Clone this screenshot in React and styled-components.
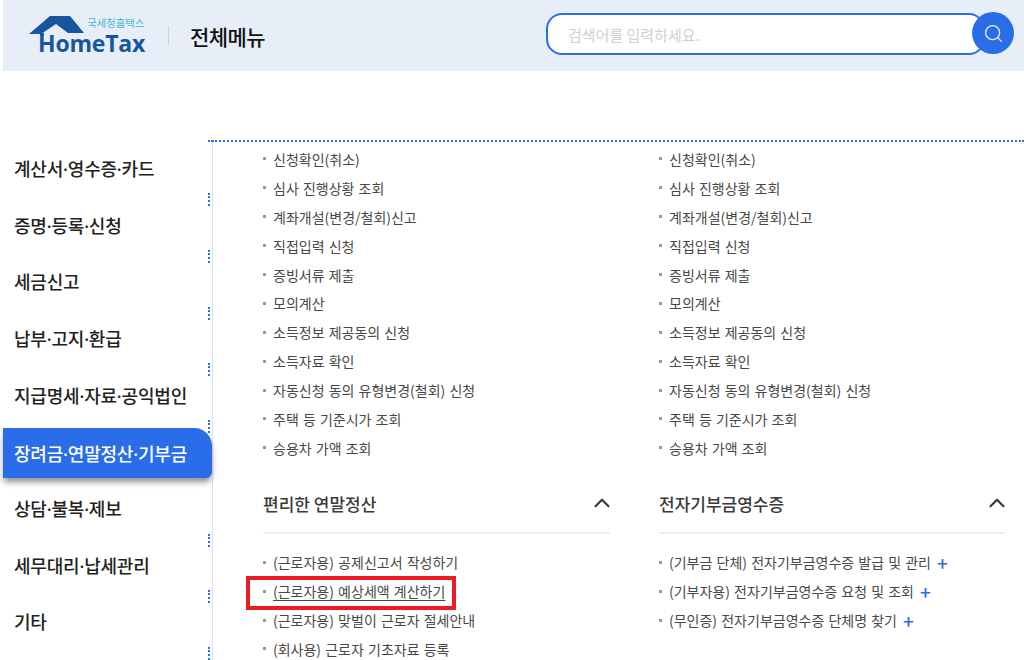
import React from 'react';
import styled, { createGlobalStyle } from 'styled-components';
import { ChevronUp, Search } from 'lucide-react';

const GlobalStyle = createGlobalStyle`
  html, body {
    margin: 0;
    padding: 0;
    background: #fff;
    overflow: hidden;
    font-family: 'Noto Sans CJK KR', 'Noto Sans', sans-serif;
  }
`;

const sideMenus = [
  '계산서·영수증·카드',
  '증명·등록·신청',
  '세금신고',
  '납부·고지·환급',
  '지급명세·자료·공익법인',
  '장려금·연말정산·기부금',
  '상담·불복·제보',
  '세무대리·납세관리',
  '기타',
];

const topLinks = [
  '신청확인(취소)',
  '심사 진행상황 조회',
  '계좌개설(변경/철회)신고',
  '직접입력 신청',
  '증빙서류 제출',
  '모의계산',
  '소득정보 제공동의 신청',
  '소득자료 확인',
  '자동신청 동의 유형변경(철회) 신청',
  '주택 등 기준시가 조회',
  '승용차 가액 조회',
];

const yearEndLinks = [
  '(근로자용) 공제신고서 작성하기',
  '(근로자용) 예상세액 계산하기',
  '(근로자용) 맞벌이 근로자 절세안내',
  '(회사용) 근로자 기초자료 등록',
];

const donationLinks = [
  '(기부금 단체) 전자기부금영수증 발급 및 관리',
  '(기부자용) 전자기부금영수증 요청 및 조회',
  '(무인증) 전자기부금영수증 단체명 찾기',
];

const Page = styled.div`
  width: 1024px;
  height: 660px;
  overflow: hidden;
  padding-left: 3px;
  box-sizing: border-box;
`;

const Header = styled.header`
  height: 71px;
  background: #e7eef8;
  display: flex;
  align-items: center;
  padding: 0 12px 0 26px;
`;

const Logo = styled.div`
  position: relative;
  width: 116px;
  height: 36px;
  margin-bottom: 3px;
`;

const LogoRoof = styled.svg`
  position: absolute;
  left: 0;
  top: 0;
`;

const LogoSub = styled.span`
  position: absolute;
  left: 58px;
  top: 1px;
  font-size: 10.5px;
  line-height: 12px;
  letter-spacing: -0.1px;
  color: #4db7d4;
`;

const LogoName = styled.span`
  position: absolute;
  left: 9px;
  top: 15px;
  font-family: 'Open Sans', sans-serif;
  font-weight: 700;
  font-size: 23px;
  line-height: 24px;
  letter-spacing: -0.2px;
  color: #17569f;
`;

const HeaderDivider = styled.span`
  width: 1px;
  height: 19px;
  background: #ccd2da;
  margin: 0 21px 0 23px;
`;

const HeaderTitle = styled.h1`
  margin: 0;
  font-size: 21px;
  font-weight: 500;
  letter-spacing: -0.6px;
  color: #111;
  flex: 1;
`;

const SearchBox = styled.div`
  position: relative;
  width: 439px;
  height: 42px;
  margin: 0 27px 3px 0;
  border: 2px solid #2a6de8;
  border-radius: 16px;
  background: #fff;
  box-sizing: border-box;
  display: flex;
  align-items: center;
  padding-left: 20px;
`;

const SearchPlaceholder = styled.span`
  font-size: 15px;
  color: #cfcfcf;
`;

const SearchButton = styled.button`
  position: absolute;
  right: -31px;
  top: -3px;
  width: 42px;
  height: 42px;
  border: 0;
  border-radius: 50%;
  padding: 0;
  background: #2a6de8;
  color: #e8f0ff;
  display: flex;
  align-items: center;
  justify-content: center;
`;

const Body = styled.div`
  display: flex;
  align-items: flex-start;
  margin-top: 70px;
`;

const SideNav = styled.nav`
  width: 209px;
  flex: none;
`;

const SideItem = styled.div`
  position: relative;
  box-sizing: border-box;
  padding-left: 11px;
  padding-bottom: ${p => (p.$active ? '0' : '3px')};
  display: flex;
  align-items: center;
  font-family: 'Noto Sans', 'Noto Sans CJK KR', sans-serif;
  font-size: 18px;
  font-weight: 500;
  letter-spacing: -0.2px;
  color: ${p => (p.$active ? '#fff' : '#222')};
  background: ${p => (p.$active ? '#2a6de8' : 'transparent')};
  border-top-right-radius: ${p => (p.$active ? '18px' : '0')};
  border-bottom-right-radius: ${p => (p.$active ? '6px' : '0')};
  box-shadow: ${p => (p.$active ? '0 5px 6px -1px rgba(0, 0, 0, 0.45)' : 'none')};
  z-index: ${p => (p.$active ? 1 : 0)};
  height: ${p => (p.$active ? '50px' : '56.7px')};
  margin: ${p => (p.$active ? '3.4px 0' : '0')};

  &::after {
    content: '';
    display: ${p => (p.$active ? 'none' : 'block')};
    position: absolute;
    right: 2px;
    top: 50%;
    height: 13px;
    border-right: 2px dotted #2a6de8;
    transform: translateY(24px);
  }
`;

const Panel = styled.section`
  position: relative;
  flex: 1;
  height: 520px;
  border-left: 1px solid #dcdcff;
  border-top: 2px dotted #2a6de8;
  margin-top: -1px;
  padding: 2.5px 19px 0 50px;
  display: grid;
  grid-template-columns: 347px 346px;
  column-gap: 49px;
  align-content: start;

  &::before {
    content: '';
    position: absolute;
    left: -5px;
    top: -2px;
    width: 5px;
    border-top: 2px dotted #2a6de8;
  }
`;

const LinkList = styled.ul`
  list-style: none;
  margin: 0;
  padding: 0;
`;

const LinkRow = styled.li`
  height: 28.9px;
  display: flex;
  align-items: center;
  font-size: 14px;
  word-spacing: 1px;
  color: #484848;
  white-space: nowrap;
  position: relative;

  &::before {
    content: '';
    width: 3px;
    height: 3px;
    background: #999;
    margin-right: 7px;
    flex: none;
  }
`;

const LinkText = styled.span`
  text-decoration: ${p => (p.$underline ? 'underline' : 'none')};
  text-underline-offset: 3px;
`;

const Highlight = styled.span`
  position: absolute;
  left: -17px;
  top: -1px;
  width: 210px;
  height: 34px;
  border: 4px solid #ed1c24;
  box-sizing: border-box;
`;

const PlusMark = styled.span`
  color: #2a6de8;
  font-size: 19px;
  font-weight: 500;
  line-height: 1;
  margin-left: 6px;
`;

const SectionHead = styled.div`
  display: flex;
  align-items: center;
  justify-content: space-between;
  height: 57.5px;
  margin-top: 12px;
  margin-bottom: 14px;
  border-bottom: 2px solid #eeeeee;
  font-size: 17px;
  font-weight: 500;
  color: #3a3a3a;

  svg {
    margin-right: -5px;
  }
`;

const Column = styled.div`
  min-width: 0;
`;

const App = () => (
  <Page>
    <GlobalStyle />
    <Header>
      <Logo>
        <LogoRoof width="116" height="36" viewBox="0 0 116 36">
          <path d="M0 18 L21 0 L41 0 L55 17 L39 17 L27 8 L12 18 Z" fill="#17569f" />
          <rect x="11" y="17" width="4" height="3" fill="#17569f" />
        </LogoRoof>
        <LogoSub>국세청홈택스</LogoSub>
        <LogoName>HomeTax</LogoName>
      </Logo>
      <HeaderDivider />
      <HeaderTitle>전체메뉴</HeaderTitle>
      <SearchBox>
        <SearchPlaceholder>검색어를 입력하세요.</SearchPlaceholder>
        <SearchButton aria-label="검색">
          <Search size={21} strokeWidth={1.5} />
        </SearchButton>
      </SearchBox>
    </Header>
    <Body>
      <SideNav>
        {sideMenus.map((menu, i) => (
          <SideItem key={menu} $active={i === 5}>
            {menu}
          </SideItem>
        ))}
      </SideNav>
      <Panel>
        <Column>
          <LinkList>
            {topLinks.map(link => (
              <LinkRow key={link}>{link}</LinkRow>
            ))}
          </LinkList>
          <SectionHead>
            편리한 연말정산
            <ChevronUp size={26} strokeWidth={2} />
          </SectionHead>
          <LinkList>
            {yearEndLinks.map((link, i) => (
              <LinkRow key={link}>
                <LinkText $underline={i === 1}>{link}</LinkText>
                {i === 1 && <Highlight />}
              </LinkRow>
            ))}
          </LinkList>
        </Column>
        <Column>
          <LinkList>
            {topLinks.map(link => (
              <LinkRow key={link}>{link}</LinkRow>
            ))}
          </LinkList>
          <SectionHead>
            전자기부금영수증
            <ChevronUp size={26} strokeWidth={2} />
          </SectionHead>
          <LinkList>
            {donationLinks.map(link => (
              <LinkRow key={link}>
                {link}
                <PlusMark>+</PlusMark>
              </LinkRow>
            ))}
          </LinkList>
        </Column>
      </Panel>
    </Body>
  </Page>
);

export default App;
